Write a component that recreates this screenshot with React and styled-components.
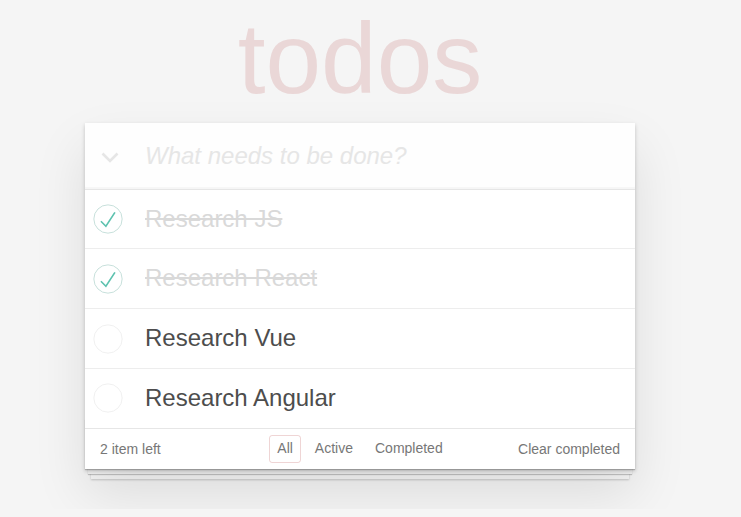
import React from "react";
import styled, { createGlobalStyle } from "styled-components";

const GlobalStyle = createGlobalStyle`
  html, body {
    margin: 0;
    padding: 0;
  }
  body {
    background: #f5f5f5;
    color: #4d4d4d;
    font: 14px "Liberation Sans", Arial, Helvetica, sans-serif;
    line-height: 1.4em;
    -webkit-font-smoothing: antialiased;
  }
`;

const todos = [
  { id: 1, title: "Research JS", completed: true },
  { id: 2, title: "Research React", completed: true },
  { id: 3, title: "Research Vue", completed: false },
  { id: 4, title: "Research Angular", completed: false },
];

const filters = ["All", "Active", "Completed"];

const Page = styled.div`
  width: 550px;
  margin-left: 85px;
  padding-top: 1px;
  padding-bottom: 40px;
`;

const Title = styled.h1`
  margin: 0 0 7px 0;
  height: 115px;
  font-size: 100px;
  line-height: 115px;
  font-weight: 100;
  text-align: center;
  color: rgba(175, 47, 47, 0.15);
`;

const Card = styled.section`
  background: #fff;
  position: relative;
  box-shadow: 0 2px 4px 0 rgba(0, 0, 0, 0.2), 0 25px 50px 0 rgba(0, 0, 0, 0.1);
`;

const Header = styled.header`
  display: flex;
  align-items: center;
  background: rgba(0, 0, 0, 0.003);
  box-shadow: inset 0 -2px 1px rgba(0, 0, 0, 0.03);
`;

const ToggleAll = styled.div`
  width: 60px;
  flex: none;
  display: flex;
  align-items: center;
  padding-left: 16px;
  padding-top: 3px;
  box-sizing: border-box;
`;

const NewTodo = styled.input`
  flex: 1;
  min-width: 0;
  border: none;
  outline: none;
  background: transparent;
  padding: 16px 16px 16px 0;
  font-family: inherit;
  font-size: 24px;
  font-weight: 300;
  line-height: 1.4em;
  height: 65.6px;
  box-sizing: border-box;
  color: inherit;
  &::placeholder {
    font-style: italic;
    color: #e6e6e6;
  }
`;

const List = styled.ul`
  list-style: none;
  margin: 0;
  padding: 0;
  border-top: 1px solid #e6e6e6;
`;

const Item = styled.li`
  display: flex;
  align-items: center;
  font-size: 24px;
  border-bottom: 1px solid #ededed;
  &:last-child {
    border-bottom: none;
  }
`;

const CheckCell = styled.div`
  width: 60px;
  flex: none;
  display: flex;
  align-items: center;
  padding-left: 8px;
  box-sizing: border-box;
`;

const Label = styled.label`
  padding: 15px 15px 15px 0;
  line-height: 1.2;
  font-weight: 400;
  color: ${(p) => (p.$done ? "#d9d9d9" : "#4d4d4d")};
  text-decoration: ${(p) => (p.$done ? "line-through" : "none")};
`;

const Footer = styled.footer`
  position: relative;
  color: #777;
  padding: 3px 15px;
  min-height: 34px;
  border-top: 1px solid #e6e6e6;
  display: grid;
  grid-template-columns: 1fr auto 1fr;
  align-items: center;
  &::after {
    content: "";
    position: absolute;
    right: 0;
    bottom: 0;
    left: 0;
    height: 50px;
    box-shadow: 0 1px 1px rgba(0, 0, 0, 0.2), 0 8px 0 -3px #f6f6f6,
      0 9px 1px -3px rgba(0, 0, 0, 0.2), 0 16px 0 -6px #f6f6f6,
      0 17px 2px -6px rgba(0, 0, 0, 0.2);
    pointer-events: none;
    z-index: -1;
  }
`;

const Count = styled.span`
  line-height: 20px;
  padding-top: 1px;
`;

const Filters = styled.ul`
  list-style: none;
  margin: 0;
  padding: 0;
  display: flex;
`;

const FilterLink = styled.a`
  display: block;
  color: inherit;
  margin: 3px;
  padding: 3px 7px;
  line-height: 1.4em;
  text-decoration: none;
  border: 1px solid transparent;
  border-radius: 3px;
  border-color: ${(p) => (p.$selected ? "rgba(175, 47, 47, 0.2)" : "transparent")};
`;

const ClearButton = styled.button`
  justify-self: end;
  border: none;
  background: none;
  padding: 1px 0 0 0;
  margin: 0;
  font: inherit;
  color: inherit;
  line-height: 20px;
  cursor: pointer;
`;

const Chevron = () => (
  <svg width="18" height="11" viewBox="0 0 18 11">
    <polyline points="1.5,1.5 9,9 16.5,1.5" fill="none" stroke="#e6e6e6" strokeWidth="2.6" />
  </svg>
);

const Check = ({ done }) => (
  <svg width="30" height="30" viewBox="-3 -3 106 106">
    <circle cx="50" cy="50" r="50" fill="none" stroke={done ? "#bddad5" : "#ededed"} strokeWidth="3" />
    {done && <path fill="#5dc2af" d="M72 25L42 71 27 56l-4 4 20 20 34-52z" />}
  </svg>
);

export default function App() {
  const left = todos.filter((t) => !t.completed).length;
  return (
    <>
      <GlobalStyle />
      <Page>
        <Title>todos</Title>
        <Card>
          <Header>
            <ToggleAll>
              <Chevron />
            </ToggleAll>
            <NewTodo placeholder="What needs to be done?" />
          </Header>
          <List>
            {todos.map((t) => (
              <Item key={t.id}>
                <CheckCell>
                  <Check done={t.completed} />
                </CheckCell>
                <Label $done={t.completed}>{t.title}</Label>
              </Item>
            ))}
          </List>
          <Footer>
            <Count>{left} item left</Count>
            <Filters>
              {filters.map((f) => (
                <li key={f}>
                  <FilterLink href="#" $selected={f === "All"}>
                    {f}
                  </FilterLink>
                </li>
              ))}
            </Filters>
            <ClearButton>Clear completed</ClearButton>
          </Footer>
        </Card>
      </Page>
    </>
  );
}
